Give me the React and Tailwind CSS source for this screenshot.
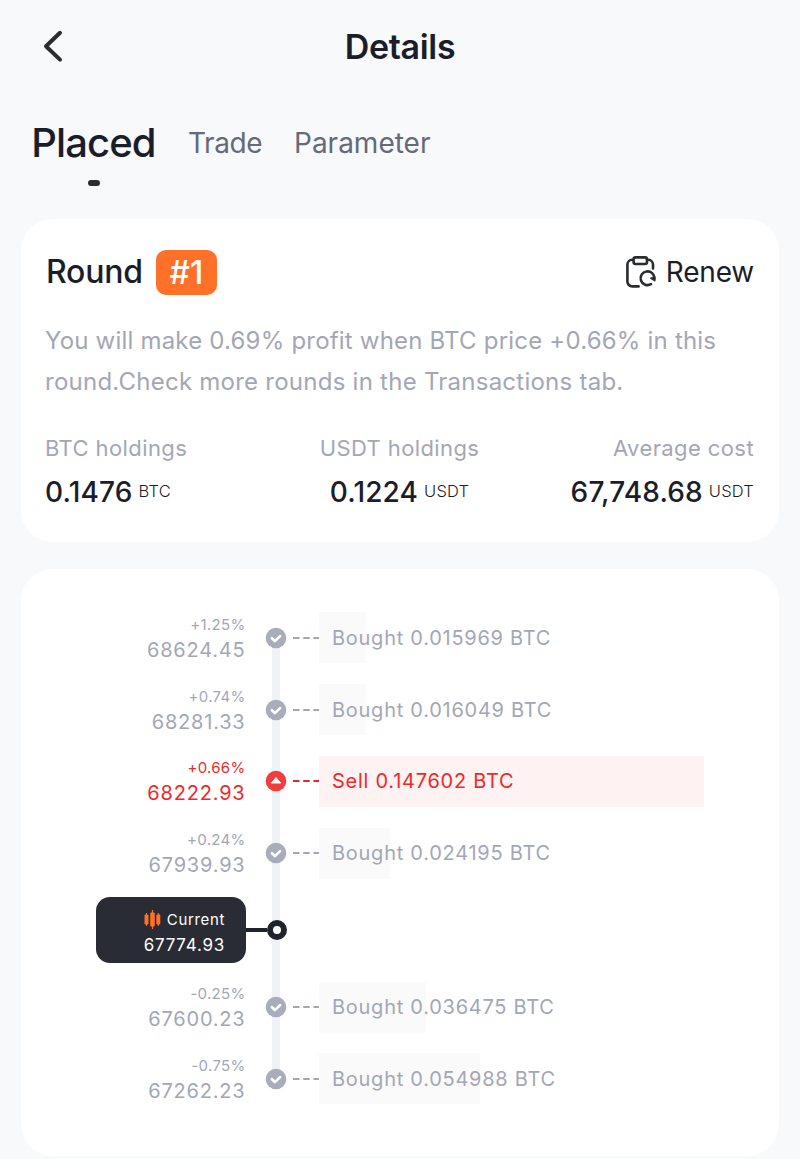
import React from "react";

const orders = [
  { change: "+1.25%", price: "68624.45", label: "Bought 0.015969 BTC", width: 47 },
  { change: "+0.74%", price: "68281.33", label: "Bought 0.016049 BTC", width: 47 },
  { change: "+0.66%", price: "68222.93", label: "Sell 0.147602 BTC", width: 385, sell: true },
  { change: "+0.24%", price: "67939.93", label: "Bought 0.024195 BTC", width: 71 },
  { current: true, price: "67774.93" },
  { change: "-0.25%", price: "67600.23", label: "Bought 0.036475 BTC", width: 107 },
  { change: "-0.75%", price: "67262.23", label: "Bought 0.054988 BTC", width: 161 },
];

function RenewIcon() {
  return (
    <svg width="32" height="34" viewBox="0 0 32 34" fill="none" stroke="#2b2c2e" strokeWidth="2.6" strokeLinecap="round" strokeLinejoin="round">
      <path d="M8 4.8H7A4.8 4.8 0 0 0 2.4 9.6V26.6a4.8 4.8 0 0 0 4.8 4.8h6.4" />
      <path d="M22 4.8h1.4A4.8 4.8 0 0 1 28 9.6V13.4" />
      <rect x="8.6" y="2.4" width="13.4" height="6.6" rx="2" />
      <path d="M26 29.2A6.9 6.9 0 1 1 29.4 23.6" />
      <path d="M30 21.8v4.4l-4.4-2.8z" strokeWidth="1" fill="#2b2c2e" />
    </svg>
  );
}

function StatusDot({ sell }) {
  return (
    <svg className="relative shrink-0" width="22" height="22" viewBox="0 0 22 22" fill="none">
      <circle cx="11" cy="11" r="10.3" fill={sell ? "#f23d3f" : "#a9adba"} />
      {sell ? (
        <path d="M11 7.6l4.6 5.4H6.4z" fill="#fff" stroke="#fff" strokeWidth="1" strokeLinejoin="round" />
      ) : (
        <path d="M6.9 11.2l3 2.9 5.2-5" stroke="#fff" strokeWidth="2.6" strokeLinecap="round" strokeLinejoin="round" />
      )}
    </svg>
  );
}

function OrderRow({ order }) {
  const tone = order.sell ? "text-[#f0282b]" : "text-[#a3a7b5]";
  return (
    <div className={`flex h-[71.8px] items-center ${tone}`}>
      <div className="w-[224.5px] pt-[2px] text-right">
        <div className="text-[15px] leading-[22px] tracking-[0.3px]">{order.change}</div>
        <div className="text-[20px] leading-[28px] tracking-[0.8px]">{order.price}</div>
      </div>
      <div className="ml-[19.5px] flex w-[54px] items-center">
        <StatusDot sell={order.sell} />
        <svg className="ml-[6px]" width="28" height="2" viewBox="0 0 28 2">
          <path d="M0 1h28" stroke={order.sell ? "#e5262a" : "#a3a7b5"} strokeWidth="2" strokeDasharray="7 4" />
        </svg>
      </div>
      <div
        className={`flex h-[51px] items-center ${order.sell ? "bg-[#fff2f2]" : "bg-[#fafafa]"}`}
        style={{ width: order.width }}
      >
        <span className="whitespace-nowrap pl-[13px] text-[20px] tracking-[0.74px]">{order.label}</span>
      </div>
    </div>
  );
}

function CurrentRow({ price }) {
  return (
    <div className="flex h-[82px] items-center pl-[75px]">
      <div className="flex h-[66px] w-[150px] flex-col items-end justify-center rounded-[14px] bg-[#292c34] pt-[5px] pr-[21px] text-white">
        <div className="flex items-center gap-[6px] text-[15px] leading-[24px] tracking-[0.65px]">
          <svg width="17" height="19" viewBox="0 0 17 19" fill="#ff7029">
            <rect x="0.5" y="4.5" width="4" height="10" rx="1" />
            <rect x="2" y="3" width="1" height="13" />
            <rect x="6.2" y="2.5" width="4.6" height="14" rx="1" />
            <rect x="7.9" y="0" width="1.2" height="19" />
            <rect x="12.3" y="4.5" width="4" height="10" rx="1" />
            <rect x="13.8" y="3" width="1" height="13" />
          </svg>
          <span>Current</span>
        </div>
        <div className="text-[17px] leading-[26px] tracking-[0.75px]">{price}</div>
      </div>
      <div className="h-[4px] w-[21px] bg-[#20232b]" />
      <div className="relative h-[20px] w-[20px] rounded-full border-[6px] border-[#20232b] bg-white" />
    </div>
  );
}

function Holding({ label, value, unit, align }) {
  return (
    <div className={`flex flex-col ${align}`}>
      <div className="text-[22px] leading-[28px] tracking-[0.4px] text-[#a3a7b5]">{label}</div>
      <div className="mt-[11px] flex gap-[6px] leading-[38px]">
        <span className="text-[28px] font-medium tracking-[0.15px]">{value}</span>
        <span className="-mt-px text-[16.5px] font-light tracking-[0.2px]">{unit}</span>
      </div>
    </div>
  );
}

export default function App() {
  return (
    <div className="h-[1159px] w-[800px] overflow-hidden bg-[#f7f9fb] font-['Inter',sans-serif] text-[#1b1d28]">
      {/* Header */}
      <header className="grid h-[92px] grid-cols-3 items-center">
        <svg className="ml-[42px]" width="22" height="34" viewBox="0 0 22 34" fill="none" stroke="#2b2c2e" strokeWidth="4" strokeLinecap="round" strokeLinejoin="round">
          <path d="M18 3.8L4 17.2L18 30.6" />
        </svg>
        <h1 className="text-center text-[34px] font-semibold tracking-[-0.3px]">Details</h1>
      </header>

      {/* Tabs */}
      <nav className="flex h-[127px] pl-[32px] leading-[50px]">
        <div className="mt-[26px] flex w-[123px] flex-col items-center">
          <span className="text-[40px] font-medium tracking-[-0.9px]">Placed</span>
          <span className="mt-[12px] h-[6px] w-[12px] rounded-[3px] bg-[#2b2c2e]" />
        </div>
        <span className="mt-[26px] ml-[33px] w-[106px] text-[28px] tracking-[-0.4px] text-[#666978]">Trade</span>
        <span className="mt-[26px] text-[28px] text-[#666978]">Parameter</span>
      </nav>

      <main className="mx-[21px] flex flex-col gap-[27px]">
        {/* Round summary */}
        <section className="h-[323px] rounded-[32px] bg-white px-[25px] pt-[30px]">
          <div className="flex h-[46px] items-center justify-between">
            <div className="flex items-center gap-[13px]">
              <span className="text-[32px] font-medium tracking-[-0.2px]">Round</span>
              <span className="flex h-[45px] w-[61px] items-center justify-center rounded-[10px] bg-[#ff7029] pt-px text-[32px] font-medium text-white">#1</span>
            </div>
            <div className="flex items-center gap-[9px]">
              <RenewIcon />
              <span className="text-[28px] tracking-[-0.2px]">Renew</span>
            </div>
          </div>
          <p className="mt-[25px] -ml-px whitespace-nowrap text-[24px] leading-[41px] tracking-[0.2px] text-[#a3a7b5]">
            You will make 0.69% profit when BTC price +0.66% in this
            <br />
            <span className="tracking-[0.25px]">round.Check more rounds in the Transactions tab.</span>
          </p>
          <div className="mt-[32px] -ml-px grid grid-cols-3">
            <Holding label="BTC holdings" value="0.1476" unit="BTC" align="items-start" />
            <Holding label="USDT holdings" value="0.1224" unit="USDT" align="items-center" />
            <Holding label="Average cost" value="67,748.68" unit="USDT" align="items-end" />
          </div>
        </section>

        {/* Price ladder */}
        <section className="relative h-[587px] rounded-[32px] bg-white pt-[33px]">
          <div className="absolute top-[69px] left-[251px] h-[441px] w-[8px] bg-[#f1f2f7]" />
          <div className="relative">
            {orders.map((order) =>
              order.current ? (
                <CurrentRow key={order.price} price={order.price} />
              ) : (
                <OrderRow key={order.price} order={order} />
              )
            )}
          </div>
        </section>
      </main>
    </div>
  );
}
